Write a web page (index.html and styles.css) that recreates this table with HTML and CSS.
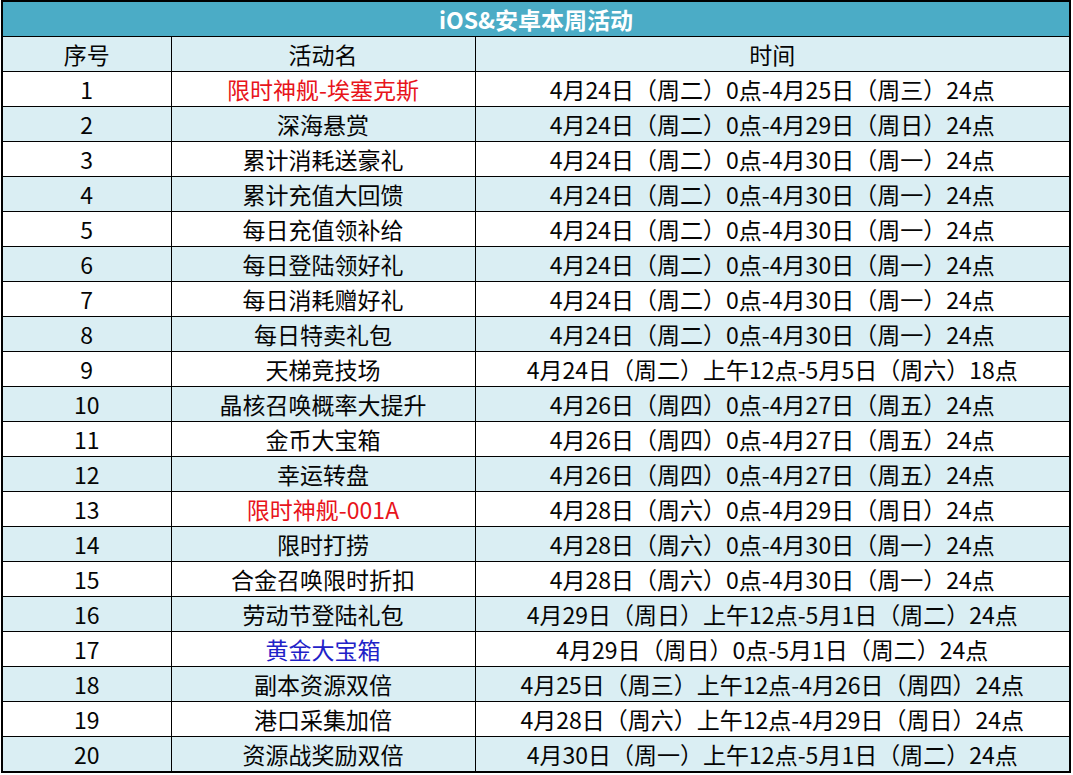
FILE: index.html
```html
<!DOCTYPE html>
<html lang="zh-CN">
<head>
<meta charset="utf-8">
<title>iOS&amp;安卓本周活动</title>
<link rel="stylesheet" href="styles.css">
</head>
<body>
<table class="sheet">
  <colgroup>
    <col class="c-no">
    <col class="c-name">
    <col class="c-time">
  </colgroup>
  <thead>
    <tr class="title"><th colspan="3">iOS&amp;安卓本周活动</th></tr>
    <tr class="head"><th>序号</th><th>活动名</th><th>时间</th></tr>
  </thead>
  <tbody>
    <tr><td>1</td><td class="red">限时神舰-埃塞克斯</td><td>4月24日（周二）0点-4月25日（周三）24点</td></tr>
    <tr><td>2</td><td>深海悬赏</td><td>4月24日（周二）0点-4月29日（周日）24点</td></tr>
    <tr><td>3</td><td>累计消耗送豪礼</td><td>4月24日（周二）0点-4月30日（周一）24点</td></tr>
    <tr><td>4</td><td>累计充值大回馈</td><td>4月24日（周二）0点-4月30日（周一）24点</td></tr>
    <tr><td>5</td><td>每日充值领补给</td><td>4月24日（周二）0点-4月30日（周一）24点</td></tr>
    <tr><td>6</td><td>每日登陆领好礼</td><td>4月24日（周二）0点-4月30日（周一）24点</td></tr>
    <tr><td>7</td><td>每日消耗赠好礼</td><td>4月24日（周二）0点-4月30日（周一）24点</td></tr>
    <tr><td>8</td><td>每日特卖礼包</td><td>4月24日（周二）0点-4月30日（周一）24点</td></tr>
    <tr><td>9</td><td>天梯竞技场</td><td>4月24日（周二）上午12点-5月5日（周六）18点</td></tr>
    <tr><td>10</td><td>晶核召唤概率大提升</td><td>4月26日（周四）0点-4月27日（周五）24点</td></tr>
    <tr><td>11</td><td>金币大宝箱</td><td>4月26日（周四）0点-4月27日（周五）24点</td></tr>
    <tr><td>12</td><td>幸运转盘</td><td>4月26日（周四）0点-4月27日（周五）24点</td></tr>
    <tr><td>13</td><td class="red">限时神舰-001A</td><td>4月28日（周六）0点-4月29日（周日）24点</td></tr>
    <tr><td>14</td><td>限时打捞</td><td>4月28日（周六）0点-4月30日（周一）24点</td></tr>
    <tr><td>15</td><td>合金召唤限时折扣</td><td>4月28日（周六）0点-4月30日（周一）24点</td></tr>
    <tr><td>16</td><td>劳动节登陆礼包</td><td>4月29日（周日）上午12点-5月1日（周二）24点</td></tr>
    <tr><td>17</td><td class="blue">黄金大宝箱</td><td>4月29日（周日）0点-5月1日（周二）24点</td></tr>
    <tr><td>18</td><td>副本资源双倍</td><td>4月25日（周三）上午12点-4月26日（周四）24点</td></tr>
    <tr><td>19</td><td>港口采集加倍</td><td>4月28日（周六）上午12点-4月29日（周日）24点</td></tr>
    <tr><td>20</td><td>资源战奖励双倍</td><td>4月30日（周一）上午12点-5月1日（周二）24点</td></tr>
  </tbody>
</table>
</body>
</html>
```

FILE: styles.css
```css
html, body {
  margin: 0;
  padding: 0;
  background: #ffffff;
}

body {
  font-family: "Noto Sans CJK SC", "Open Sans", sans-serif;
  color: #050505;
}

.sheet {
  margin: 0 0 0 1px;
  width: 1070px;
  border-collapse: collapse;
  table-layout: fixed;
  border: 2px solid #000;
}

.c-no { width: 169px; }
.c-name { width: 304px; }
.c-time { width: auto; }

.sheet th,
.sheet td {
  border: 1px solid #000;
  padding: 0;
  text-align: center;
  vertical-align: middle;
  font-size: 23px;
  font-weight: 400;
  line-height: 26px;
  height: 34px;
  white-space: nowrap;
}

.title th {
  background: #4bacc6;
  color: #ffffff;
  font-weight: 700;
  font-size: 23px;
  height: 34px;
  border-bottom: 1px solid #000;
}

.head th {
  background: #daeef3;
}

tbody tr:nth-child(even) td {
  background: #daeef3;
}

.red { color: #e8141b; }
.blue { color: #1f22c8; }
```
